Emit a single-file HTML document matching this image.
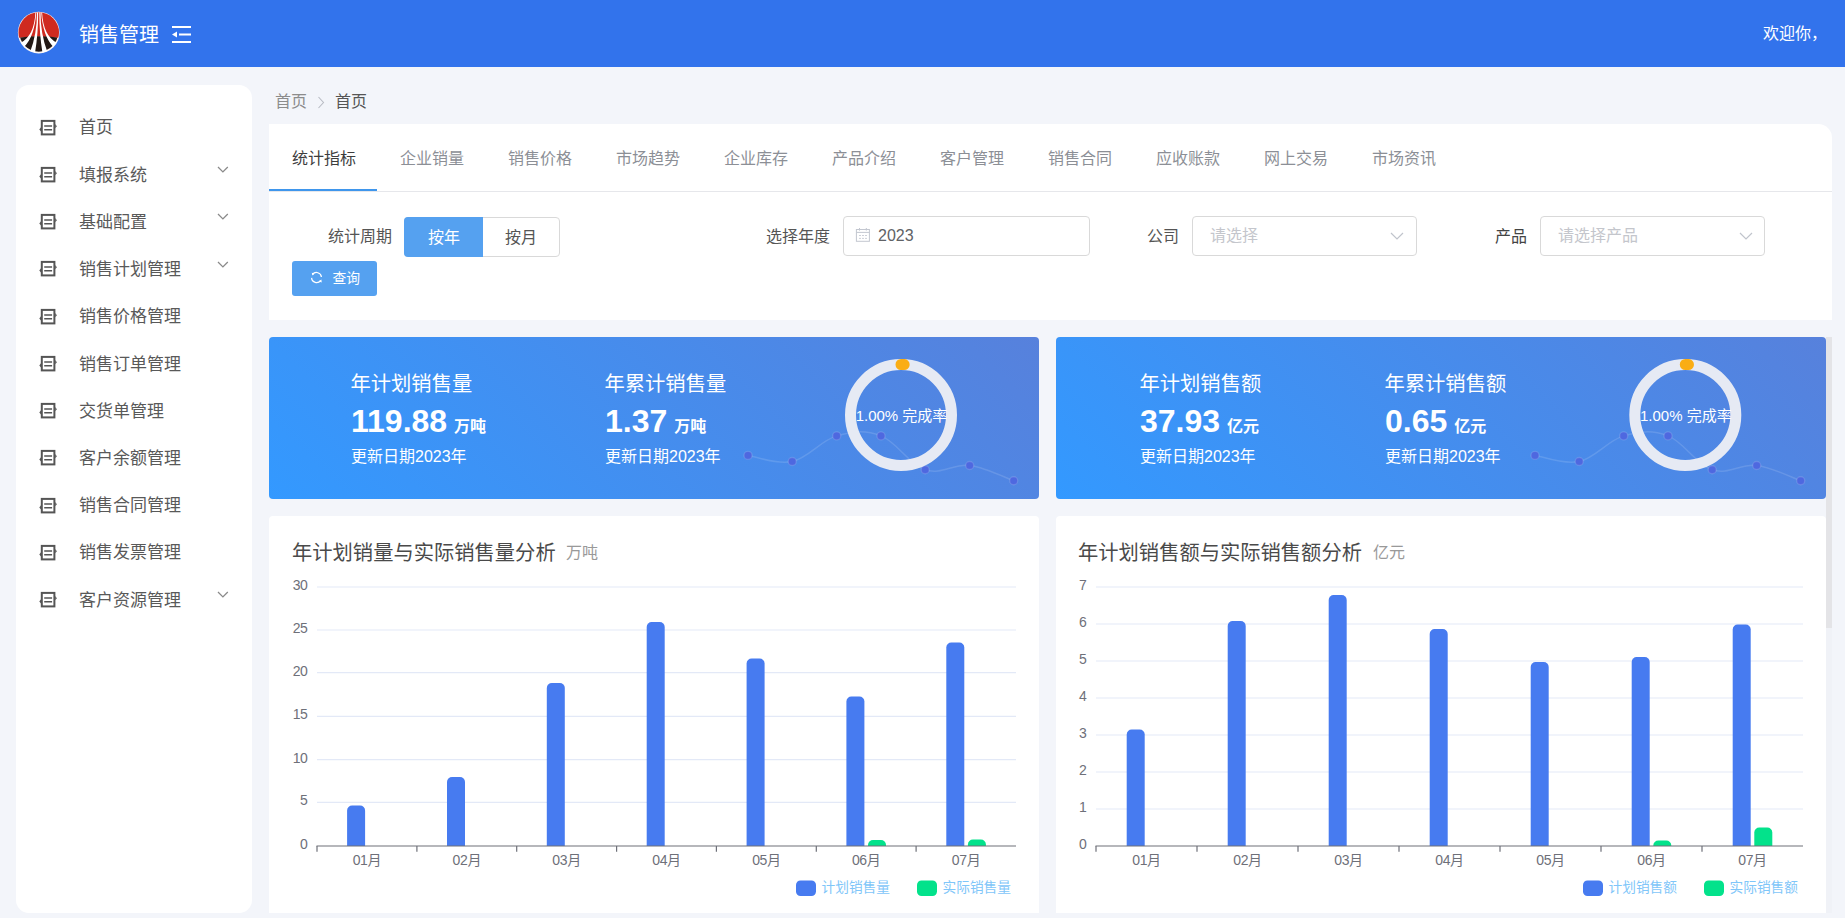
<!DOCTYPE html><html lang="zh-CN"><head><meta charset="utf-8"><title>销售管理</title><style>
*{box-sizing:border-box;margin:0;padding:0}
html,body{width:1845px;height:918px;overflow:hidden}
body{background:#f3f5fa;font-family:"Liberation Sans","Noto Sans CJK SC",sans-serif;position:relative;color:#4d4d4d}
.abs{position:absolute}
.t{position:absolute;white-space:nowrap;line-height:1}
#hdr{left:0;top:0;width:1845px;height:67px;background:#3273ec}
#side{left:16px;top:85px;width:236px;height:828px;background:#fff;border-radius:13px}
.mi{font-size:17px;color:#595959;left:79px}
.tab{font-size:16px;color:#8c8f96}
.lbl{font-size:16px;color:#555}
.inp{border:1px solid #d9d9d9;border-radius:4px;background:#fff;height:40px;top:216px}
.ph{font-size:16px;color:#c4c6cc}
.card{background:#fff;border-radius:4px 4px 0 0}
.stat{border-radius:4px;background:linear-gradient(45deg,#3399ff 0%,#5781dc 100%);overflow:hidden}
.st1{font-size:20.3px;color:#fff;font-weight:400;margin-left:-.5px}
.st2{font-size:32px;color:#fff;font-weight:700}
.st2 small{font-size:16px;font-weight:700;margin-left:7px}
.st3{font-size:16px;color:#fff}
svg{position:absolute;overflow:visible}
svg text{font-family:"Liberation Sans","Noto Sans CJK SC",sans-serif}
</style></head><body>
<div id="hdr" class="abs"></div>
<svg style="left:12px;top:6px" width="54" height="54" viewBox="0 0 54 54">
<defs><clipPath id="lc"><circle cx="26.75" cy="26.6" r="20.3"/></clipPath><clipPath id="lc2"><circle cx="26.75" cy="26.3" r="19.4"/></clipPath></defs>
<circle cx="26.75" cy="26.6" r="20.85" fill="#fdf6f4"/>
<g clip-path="url(#lc)"><path d="M0 0 H54 V33.2 Q26.75 27.6 0 33.2 Z" fill="#cf2a20"/></g>
<g clip-path="url(#lc2)"><path d="M0 33 Q26.75 27.6 54 33 V54 H0 Z" fill="#231815"/></g>
<g fill="#fff" clip-path="url(#lc)">
<path d="M23.5 5 Q22.6 30 8.3 37 L12.1 40.9 Q22.9 30 24.4 5 Z"/>
<path d="M25.0 5 Q25.2 28 17.6 47.5 L22.9 47.5 Q26.3 28 26.2 5 Z"/>
<path d="M30.0 5 Q30.9 30 45.2 37 L41.4 40.9 Q30.6 30 29.1 5 Z"/>
<path d="M28.5 5 Q28.3 28 35.9 47.5 L30.6 47.5 Q27.2 28 27.3 5 Z"/>
</g></svg>
<div class="t" style="left:79px;top:25px;font-size:20px;color:#fff">销售管理</div>
<svg style="left:172px;top:26px" width="19" height="17" viewBox="0 0 19 17"><g fill="#fff"><rect x="0" y="0" width="19" height="2"/><rect x="7" y="7.5" width="12" height="2"/><rect x="0" y="15" width="19" height="2"/><path d="M0 8.5 L5 5.5 V11.5 Z"/></g></svg>
<div class="t" style="left:1763px;top:26px;font-size:16px;color:#fff">欢迎你，</div>
<div id="side" class="abs"></div>
<svg style="left:39px;top:118.5px" width="18" height="17" viewBox="0 0 18 17"><rect x="2.8" y="1.9" width="12.6" height="13.5" fill="none" stroke="#555" stroke-width="2"/><path d="M5.2 7 H13.1 M5.2 10.7 H13.1" stroke="#555" stroke-width="1.5" fill="none"/><path d="M16.2 5.1 L17.9 7.2 L16.2 9.3 Z M2 8.3 L0.3 10.4 L2 12.5 Z" fill="#555"/></svg>
<div class="t mi" style="top:119px">首页</div>
<svg style="left:39px;top:165.8px" width="18" height="17" viewBox="0 0 18 17"><rect x="2.8" y="1.9" width="12.6" height="13.5" fill="none" stroke="#555" stroke-width="2"/><path d="M5.2 7 H13.1 M5.2 10.7 H13.1" stroke="#555" stroke-width="1.5" fill="none"/><path d="M16.2 5.1 L17.9 7.2 L16.2 9.3 Z M2 8.3 L0.3 10.4 L2 12.5 Z" fill="#555"/></svg>
<div class="t mi" style="top:167px">填报系统</div>
<svg style="left:217px;top:166.2px" width="12" height="8" viewBox="0 0 12 8"><path d="M1 1 L5.9 5.9 L10.8 1" fill="none" stroke="#8a8a8a" stroke-width="1.3"/></svg>
<svg style="left:39px;top:213.0px" width="18" height="17" viewBox="0 0 18 17"><rect x="2.8" y="1.9" width="12.6" height="13.5" fill="none" stroke="#555" stroke-width="2"/><path d="M5.2 7 H13.1 M5.2 10.7 H13.1" stroke="#555" stroke-width="1.5" fill="none"/><path d="M16.2 5.1 L17.9 7.2 L16.2 9.3 Z M2 8.3 L0.3 10.4 L2 12.5 Z" fill="#555"/></svg>
<div class="t mi" style="top:214px">基础配置</div>
<svg style="left:217px;top:213.4px" width="12" height="8" viewBox="0 0 12 8"><path d="M1 1 L5.9 5.9 L10.8 1" fill="none" stroke="#8a8a8a" stroke-width="1.3"/></svg>
<svg style="left:39px;top:260.2px" width="18" height="17" viewBox="0 0 18 17"><rect x="2.8" y="1.9" width="12.6" height="13.5" fill="none" stroke="#555" stroke-width="2"/><path d="M5.2 7 H13.1 M5.2 10.7 H13.1" stroke="#555" stroke-width="1.5" fill="none"/><path d="M16.2 5.1 L17.9 7.2 L16.2 9.3 Z M2 8.3 L0.3 10.4 L2 12.5 Z" fill="#555"/></svg>
<div class="t mi" style="top:261px">销售计划管理</div>
<svg style="left:217px;top:260.6px" width="12" height="8" viewBox="0 0 12 8"><path d="M1 1 L5.9 5.9 L10.8 1" fill="none" stroke="#8a8a8a" stroke-width="1.3"/></svg>
<svg style="left:39px;top:307.5px" width="18" height="17" viewBox="0 0 18 17"><rect x="2.8" y="1.9" width="12.6" height="13.5" fill="none" stroke="#555" stroke-width="2"/><path d="M5.2 7 H13.1 M5.2 10.7 H13.1" stroke="#555" stroke-width="1.5" fill="none"/><path d="M16.2 5.1 L17.9 7.2 L16.2 9.3 Z M2 8.3 L0.3 10.4 L2 12.5 Z" fill="#555"/></svg>
<div class="t mi" style="top:308px">销售价格管理</div>
<svg style="left:39px;top:354.8px" width="18" height="17" viewBox="0 0 18 17"><rect x="2.8" y="1.9" width="12.6" height="13.5" fill="none" stroke="#555" stroke-width="2"/><path d="M5.2 7 H13.1 M5.2 10.7 H13.1" stroke="#555" stroke-width="1.5" fill="none"/><path d="M16.2 5.1 L17.9 7.2 L16.2 9.3 Z M2 8.3 L0.3 10.4 L2 12.5 Z" fill="#555"/></svg>
<div class="t mi" style="top:356px">销售订单管理</div>
<svg style="left:39px;top:402.0px" width="18" height="17" viewBox="0 0 18 17"><rect x="2.8" y="1.9" width="12.6" height="13.5" fill="none" stroke="#555" stroke-width="2"/><path d="M5.2 7 H13.1 M5.2 10.7 H13.1" stroke="#555" stroke-width="1.5" fill="none"/><path d="M16.2 5.1 L17.9 7.2 L16.2 9.3 Z M2 8.3 L0.3 10.4 L2 12.5 Z" fill="#555"/></svg>
<div class="t mi" style="top:403px">交货单管理</div>
<svg style="left:39px;top:449.2px" width="18" height="17" viewBox="0 0 18 17"><rect x="2.8" y="1.9" width="12.6" height="13.5" fill="none" stroke="#555" stroke-width="2"/><path d="M5.2 7 H13.1 M5.2 10.7 H13.1" stroke="#555" stroke-width="1.5" fill="none"/><path d="M16.2 5.1 L17.9 7.2 L16.2 9.3 Z M2 8.3 L0.3 10.4 L2 12.5 Z" fill="#555"/></svg>
<div class="t mi" style="top:450px">客户余额管理</div>
<svg style="left:39px;top:496.5px" width="18" height="17" viewBox="0 0 18 17"><rect x="2.8" y="1.9" width="12.6" height="13.5" fill="none" stroke="#555" stroke-width="2"/><path d="M5.2 7 H13.1 M5.2 10.7 H13.1" stroke="#555" stroke-width="1.5" fill="none"/><path d="M16.2 5.1 L17.9 7.2 L16.2 9.3 Z M2 8.3 L0.3 10.4 L2 12.5 Z" fill="#555"/></svg>
<div class="t mi" style="top:497px">销售合同管理</div>
<svg style="left:39px;top:543.8px" width="18" height="17" viewBox="0 0 18 17"><rect x="2.8" y="1.9" width="12.6" height="13.5" fill="none" stroke="#555" stroke-width="2"/><path d="M5.2 7 H13.1 M5.2 10.7 H13.1" stroke="#555" stroke-width="1.5" fill="none"/><path d="M16.2 5.1 L17.9 7.2 L16.2 9.3 Z M2 8.3 L0.3 10.4 L2 12.5 Z" fill="#555"/></svg>
<div class="t mi" style="top:544px">销售发票管理</div>
<svg style="left:39px;top:591.0px" width="18" height="17" viewBox="0 0 18 17"><rect x="2.8" y="1.9" width="12.6" height="13.5" fill="none" stroke="#555" stroke-width="2"/><path d="M5.2 7 H13.1 M5.2 10.7 H13.1" stroke="#555" stroke-width="1.5" fill="none"/><path d="M16.2 5.1 L17.9 7.2 L16.2 9.3 Z M2 8.3 L0.3 10.4 L2 12.5 Z" fill="#555"/></svg>
<div class="t mi" style="top:592px">客户资源管理</div>
<svg style="left:217px;top:591.4px" width="12" height="8" viewBox="0 0 12 8"><path d="M1 1 L5.9 5.9 L10.8 1" fill="none" stroke="#8a8a8a" stroke-width="1.3"/></svg>
<div class="t" style="left:275px;top:94px;font-size:16px;color:#8c8c8c">首页</div>
<svg style="left:317px;top:95.5px" width="8" height="13" viewBox="0 0 8 13"><path d="M1.5 1 L6.5 6.5 L1.5 12" fill="none" stroke="#b9bcc4" stroke-width="1.1"/></svg>
<div class="t" style="left:335px;top:94px;font-size:16px;color:#555">首页</div>
<div class="abs" style="left:269px;top:124px;width:1563px;height:196px;background:#fff;border-radius:0 14px 0 0"></div>
<div class="abs" style="left:269px;top:191px;width:1563px;height:1px;background:#e6e7eb"></div>
<div class="abs" style="left:269px;top:189px;width:108px;height:2px;background:#3f96ec"></div>
<div class="t tab" style="left:292px;top:151px;color:#3d3d3d">统计指标</div>
<div class="t tab" style="left:400px;top:151px">企业销量</div>
<div class="t tab" style="left:508px;top:151px">销售价格</div>
<div class="t tab" style="left:616px;top:151px">市场趋势</div>
<div class="t tab" style="left:724px;top:151px">企业库存</div>
<div class="t tab" style="left:832px;top:151px">产品介绍</div>
<div class="t tab" style="left:940px;top:151px">客户管理</div>
<div class="t tab" style="left:1048px;top:151px">销售合同</div>
<div class="t tab" style="left:1156px;top:151px">应收账款</div>
<div class="t tab" style="left:1264px;top:151px">网上交易</div>
<div class="t tab" style="left:1372px;top:151px">市场资讯</div>
<div class="t lbl" style="left:328px;top:228.6px">统计周期</div>
<div class="abs" style="left:404px;top:217px;width:156px;height:40px;border:1px solid #d9d9d9;border-radius:4px;background:#fff"></div>
<div class="abs" style="left:404px;top:217px;width:79px;height:40px;background:#55a1f0;border-radius:4px 0 0 4px"></div>
<div class="t" style="left:428px;top:230.2px;font-size:16px;color:#fff">按年</div>
<div class="t" style="left:505px;top:230.2px;font-size:16px;color:#555">按月</div>
<div class="t lbl" style="left:766px;top:228.6px">选择年度</div>
<div class="abs inp" style="left:843px;width:247px"></div>
<svg style="left:855px;top:227px" width="16" height="16" viewBox="0 0 16 16"><g fill="none" stroke="#c3c7d0" stroke-width="1"><rect x="1.4" y="2.5" width="13" height="11.8"/><path d="M1.4 5.4 H14.4 M4.5 1 V3.6 M11.3 1 V3.6"/><path d="M4 8.5 H12 M4 11.4 H12" stroke-dasharray="2 1" stroke="#cdd0d8"/></g></svg>
<div class="t" style="left:878px;top:228px;font-size:16px;color:#606266">2023</div>
<div class="t lbl" style="left:1147px;top:228.6px">公司</div>
<div class="abs inp" style="left:1192px;width:225px"></div>
<div class="t ph" style="left:1210px;top:228px">请选择</div>
<svg style="left:1390px;top:232px" width="14" height="8" viewBox="0 0 14 8"><path d="M1 1 L7 7 L13 1" fill="none" stroke="#c0c4cc" stroke-width="1.2"/></svg>
<div class="t lbl" style="left:1495px;top:228.6px;color:#444">产品</div>
<div class="abs inp" style="left:1540px;width:225px"></div>
<div class="t ph" style="left:1558px;top:228px">请选择产品</div>
<svg style="left:1739px;top:232px" width="14" height="8" viewBox="0 0 14 8"><path d="M1 1 L7 7 L13 1" fill="none" stroke="#c0c4cc" stroke-width="1.2"/></svg>
<div class="abs" style="left:292px;top:261px;width:85px;height:35px;background:#55a1f0;border-radius:3px"></div>
<svg style="left:310px;top:271px" width="14" height="14" viewBox="0 0 14 14"><g fill="none" stroke="#fff" stroke-width="1.25"><path d="M2.6 3.5 A4.9 4.9 0 0 1 11.4 6"/><path d="M1.6 6.9 A4.9 4.9 0 0 0 10.6 9.3"/></g><path d="M1.8 1.8 L4.4 2.6 L2.3 4.6 Z M11.7 11.5 L9 10.6 L11.4 8.6 Z" fill="#fff"/></svg>
<div class="t" style="left:332.5px;top:271.6px;font-size:13.8px;color:#fff">查询</div>
<div class="abs" style="left:1826px;top:337px;width:6px;height:576px;background:#f0f2f7"></div>
<div class="abs" style="left:1826px;top:337px;width:6px;height:291px;background:#e4e4e7"></div>
<div class="abs stat" style="left:269px;top:337px;width:770px;height:162px"></div>
<div class="t st1" style="left:351px;top:374px">年计划销售量</div>
<div class="t st2" style="left:351px;top:405px">119.88<small>万吨</small></div>
<div class="t st3" style="left:351px;top:449px">更新日期2023年</div>
<div class="t st1" style="left:605px;top:374px">年累计销售量</div>
<div class="t st2" style="left:605px;top:405px">1.37<small>万吨</small></div>
<div class="t st3" style="left:605px;top:449px">更新日期2023年</div>
<svg style="left:0;top:0" width="1845" height="918" viewBox="0 0 1845 918"><path d="M748.0 455.4 C756.0 456.5 776.2 465.0 792.2 461.5 C808.2 458.0 820.7 440.5 836.7 435.9 C852.7 431.3 865.1 429.8 881.0 435.9 C896.9 442.0 909.2 464.5 925.2 469.8 C941.2 475.1 953.8 463.5 969.7 465.5 C985.6 467.5 1005.8 478.0 1013.7 480.8" fill="none" stroke="#fff" stroke-opacity=".13" stroke-width="1.5"/><circle cx="748.0" cy="455.4" r="4" fill="#4e68e0" stroke="#fff" stroke-opacity=".14" stroke-width="1.4"/><circle cx="792.2" cy="461.5" r="4" fill="#4e68e0" stroke="#fff" stroke-opacity=".14" stroke-width="1.4"/><circle cx="836.7" cy="435.9" r="4" fill="#4e68e0" stroke="#fff" stroke-opacity=".14" stroke-width="1.4"/><circle cx="881.0" cy="435.9" r="4" fill="#4e68e0" stroke="#fff" stroke-opacity=".14" stroke-width="1.4"/><circle cx="925.2" cy="469.8" r="4" fill="#4e68e0" stroke="#fff" stroke-opacity=".14" stroke-width="1.4"/><circle cx="969.7" cy="465.5" r="4" fill="#4e68e0" stroke="#fff" stroke-opacity=".14" stroke-width="1.4"/><circle cx="1013.7" cy="480.8" r="4" fill="#4e68e0" stroke="#fff" stroke-opacity=".14" stroke-width="1.4"/><circle cx="901.0" cy="415" r="50.5" fill="none" stroke="#e6eaf4" stroke-width="11"/><path d="M901.00 364.50 A50.5 50.5 0 0 1 904.17 364.60" fill="none" stroke="#faad14" stroke-width="11" stroke-linecap="round"/><text x="901.5" y="420.5" font-size="15" fill="#fff" text-anchor="middle">1.00% 完成率</text></svg>
<div class="abs stat" style="left:1056px;top:337px;width:770px;height:162px"></div>
<div class="t st1" style="left:1140px;top:374px">年计划销售额</div>
<div class="t st2" style="left:1140px;top:405px">37.93<small>亿元</small></div>
<div class="t st3" style="left:1140px;top:449px">更新日期2023年</div>
<div class="t st1" style="left:1385px;top:374px">年累计销售额</div>
<div class="t st2" style="left:1385px;top:405px">0.65<small>亿元</small></div>
<div class="t st3" style="left:1385px;top:449px">更新日期2023年</div>
<svg style="left:0;top:0" width="1845" height="918" viewBox="0 0 1845 918"><path d="M1535.0 455.4 C1543.0 456.5 1563.2 465.0 1579.2 461.5 C1595.2 458.0 1607.7 440.5 1623.7 435.9 C1639.7 431.3 1652.1 429.8 1668.0 435.9 C1683.9 442.0 1696.2 464.5 1712.2 469.8 C1728.2 475.1 1740.8 463.5 1756.7 465.5 C1772.6 467.5 1792.8 478.0 1800.7 480.8" fill="none" stroke="#fff" stroke-opacity=".13" stroke-width="1.5"/><circle cx="1535.0" cy="455.4" r="4" fill="#4e68e0" stroke="#fff" stroke-opacity=".14" stroke-width="1.4"/><circle cx="1579.2" cy="461.5" r="4" fill="#4e68e0" stroke="#fff" stroke-opacity=".14" stroke-width="1.4"/><circle cx="1623.7" cy="435.9" r="4" fill="#4e68e0" stroke="#fff" stroke-opacity=".14" stroke-width="1.4"/><circle cx="1668.0" cy="435.9" r="4" fill="#4e68e0" stroke="#fff" stroke-opacity=".14" stroke-width="1.4"/><circle cx="1712.2" cy="469.8" r="4" fill="#4e68e0" stroke="#fff" stroke-opacity=".14" stroke-width="1.4"/><circle cx="1756.7" cy="465.5" r="4" fill="#4e68e0" stroke="#fff" stroke-opacity=".14" stroke-width="1.4"/><circle cx="1800.7" cy="480.8" r="4" fill="#4e68e0" stroke="#fff" stroke-opacity=".14" stroke-width="1.4"/><circle cx="1685.3" cy="415" r="50.5" fill="none" stroke="#e6eaf4" stroke-width="11"/><path d="M1685.30 364.50 A50.5 50.5 0 0 1 1688.47 364.60" fill="none" stroke="#faad14" stroke-width="11" stroke-linecap="round"/><text x="1685.8" y="420.5" font-size="15" fill="#fff" text-anchor="middle">1.00% 完成率</text></svg>
<div class="abs card" style="left:269px;top:516px;width:770px;height:397px"></div>
<div class="t" style="left:292.0px;top:543px;font-size:20.3px;color:#4a4a4a">年计划销量与实际销售量分析</div>
<div class="t" style="left:566px;top:545px;font-size:16px;color:#999">万吨</div>
<svg style="left:0;top:0" width="1845" height="918" viewBox="0 0 1845 918"><text x="307.1" y="849.0" font-size="14" letter-spacing="-.6" fill="#6e7079" text-anchor="end">0</text><line x1="317.0" x2="1016.0" y1="802.40" y2="802.40" stroke="#e3e9f7" stroke-width="1.1"/><text x="307.1" y="805.0" font-size="14" letter-spacing="-.6" fill="#6e7079" text-anchor="end">5</text><line x1="317.0" x2="1016.0" y1="759.60" y2="759.60" stroke="#e3e9f7" stroke-width="1.1"/><text x="307.1" y="763.0" font-size="14" letter-spacing="-.6" fill="#6e7079" text-anchor="end">10</text><line x1="317.0" x2="1016.0" y1="716.40" y2="716.40" stroke="#e3e9f7" stroke-width="1.1"/><text x="307.1" y="719.0" font-size="14" letter-spacing="-.6" fill="#6e7079" text-anchor="end">15</text><line x1="317.0" x2="1016.0" y1="672.60" y2="672.60" stroke="#e3e9f7" stroke-width="1.1"/><text x="307.1" y="676.0" font-size="14" letter-spacing="-.6" fill="#6e7079" text-anchor="end">20</text><line x1="317.0" x2="1016.0" y1="630.00" y2="630.00" stroke="#e3e9f7" stroke-width="1.1"/><text x="307.1" y="633.0" font-size="14" letter-spacing="-.6" fill="#6e7079" text-anchor="end">25</text><line x1="317.0" x2="1016.0" y1="587.00" y2="587.00" stroke="#e3e9f7" stroke-width="1.1"/><text x="307.1" y="590.0" font-size="14" letter-spacing="-.6" fill="#6e7079" text-anchor="end">30</text><path d="M347.1 846.0 V810.6 A5.0 5.0 0 0 1 352.1 805.6 H360.1 A5.0 5.0 0 0 1 365.1 810.6 V846.0 Z" fill="#477bf0"/><text x="366.9" y="865" font-size="14" letter-spacing="-.35" fill="#6e7079" text-anchor="middle">01月</text><path d="M447.0 846.0 V782.0 A5.0 5.0 0 0 1 452.0 777.0 H460.0 A5.0 5.0 0 0 1 465.0 782.0 V846.0 Z" fill="#477bf0"/><text x="466.8" y="865" font-size="14" letter-spacing="-.35" fill="#6e7079" text-anchor="middle">02月</text><path d="M546.8 846.0 V688.0 A5.0 5.0 0 0 1 551.8 683.0 H559.8 A5.0 5.0 0 0 1 564.8 688.0 V846.0 Z" fill="#477bf0"/><text x="566.6" y="865" font-size="14" letter-spacing="-.35" fill="#6e7079" text-anchor="middle">03月</text><path d="M646.7 846.0 V627.0 A5.0 5.0 0 0 1 651.7 622.0 H659.7 A5.0 5.0 0 0 1 664.7 627.0 V846.0 Z" fill="#477bf0"/><text x="666.5" y="865" font-size="14" letter-spacing="-.35" fill="#6e7079" text-anchor="middle">04月</text><path d="M746.6 846.0 V663.5 A5.0 5.0 0 0 1 751.6 658.5 H759.6 A5.0 5.0 0 0 1 764.6 663.5 V846.0 Z" fill="#477bf0"/><text x="766.4" y="865" font-size="14" letter-spacing="-.35" fill="#6e7079" text-anchor="middle">05月</text><path d="M846.4 846.0 V701.5 A5.0 5.0 0 0 1 851.4 696.5 H859.4 A5.0 5.0 0 0 1 864.4 701.5 V846.0 Z" fill="#477bf0"/><path d="M868.0 846.0 V845.0 A5.0 5.0 0 0 1 873.0 840.0 H881.0 A5.0 5.0 0 0 1 886.0 845.0 V846.0 Z" fill="#03e28b"/><text x="866.2" y="865" font-size="14" letter-spacing="-.35" fill="#6e7079" text-anchor="middle">06月</text><path d="M946.3 846.0 V647.5 A5.0 5.0 0 0 1 951.3 642.5 H959.3 A5.0 5.0 0 0 1 964.3 647.5 V846.0 Z" fill="#477bf0"/><path d="M967.9 846.0 V844.5 A5.0 5.0 0 0 1 972.9 839.5 H980.9 A5.0 5.0 0 0 1 985.9 844.5 V846.0 Z" fill="#03e28b"/><text x="966.1" y="865" font-size="14" letter-spacing="-.35" fill="#6e7079" text-anchor="middle">07月</text><line x1="316.5" x2="1016.0" y1="846.0" y2="846.0" stroke="#6e7079" stroke-width="1.15"/><line x1="317.0" x2="317.0" y1="846.0" y2="851.8" stroke="#6e7079" stroke-width="1.2"/><line x1="416.9" x2="416.9" y1="846.0" y2="851.8" stroke="#6e7079" stroke-width="1.2"/><line x1="516.7" x2="516.7" y1="846.0" y2="851.8" stroke="#6e7079" stroke-width="1.2"/><line x1="616.6" x2="616.6" y1="846.0" y2="851.8" stroke="#6e7079" stroke-width="1.2"/><line x1="716.4" x2="716.4" y1="846.0" y2="851.8" stroke="#6e7079" stroke-width="1.2"/><line x1="816.3" x2="816.3" y1="846.0" y2="851.8" stroke="#6e7079" stroke-width="1.2"/><line x1="916.1" x2="916.1" y1="846.0" y2="851.8" stroke="#6e7079" stroke-width="1.2"/><rect x="796.0" y="880.5" width="20" height="15.5" rx="4.5" fill="#477bf0"/><text x="821.5" y="891.6" font-size="13.7" fill="#7fc6f9">计划销售量</text><rect x="917.0" y="880.5" width="20" height="15.5" rx="4.5" fill="#03e28b"/><text x="942.5" y="891.6" font-size="13.7" fill="#7fc6f9">实际销售量</text></svg>
<div class="abs card" style="left:1056px;top:516px;width:770px;height:397px"></div>
<div class="t" style="left:1078.0px;top:543px;font-size:20.3px;color:#4a4a4a">年计划销售额与实际销售额分析</div>
<div class="t" style="left:1373px;top:545px;font-size:16px;color:#999">亿元</div>
<svg style="left:0;top:0" width="1845" height="918" viewBox="0 0 1845 918"><text x="1086.1" y="849.0" font-size="14" letter-spacing="-.6" fill="#6e7079" text-anchor="end">0</text><line x1="1096.0" x2="1803.0" y1="809.00" y2="809.00" stroke="#e3e9f7" stroke-width="1.1"/><text x="1086.1" y="812.0" font-size="14" letter-spacing="-.6" fill="#6e7079" text-anchor="end">1</text><line x1="1096.0" x2="1803.0" y1="772.00" y2="772.00" stroke="#e3e9f7" stroke-width="1.1"/><text x="1086.1" y="775.0" font-size="14" letter-spacing="-.6" fill="#6e7079" text-anchor="end">2</text><line x1="1096.0" x2="1803.0" y1="735.00" y2="735.00" stroke="#e3e9f7" stroke-width="1.1"/><text x="1086.1" y="738.0" font-size="14" letter-spacing="-.6" fill="#6e7079" text-anchor="end">3</text><line x1="1096.0" x2="1803.0" y1="698.00" y2="698.00" stroke="#e3e9f7" stroke-width="1.1"/><text x="1086.1" y="701.0" font-size="14" letter-spacing="-.6" fill="#6e7079" text-anchor="end">4</text><line x1="1096.0" x2="1803.0" y1="661.00" y2="661.00" stroke="#e3e9f7" stroke-width="1.1"/><text x="1086.1" y="664.0" font-size="14" letter-spacing="-.6" fill="#6e7079" text-anchor="end">5</text><line x1="1096.0" x2="1803.0" y1="624.00" y2="624.00" stroke="#e3e9f7" stroke-width="1.1"/><text x="1086.1" y="627.0" font-size="14" letter-spacing="-.6" fill="#6e7079" text-anchor="end">6</text><line x1="1096.0" x2="1803.0" y1="587.00" y2="587.00" stroke="#e3e9f7" stroke-width="1.1"/><text x="1086.1" y="590.0" font-size="14" letter-spacing="-.6" fill="#6e7079" text-anchor="end">7</text><path d="M1126.7 846.0 V734.5 A5.0 5.0 0 0 1 1131.7 729.5 H1139.7 A5.0 5.0 0 0 1 1144.7 734.5 V846.0 Z" fill="#477bf0"/><text x="1146.5" y="865" font-size="14" letter-spacing="-.35" fill="#6e7079" text-anchor="middle">01月</text><path d="M1227.7 846.0 V626.0 A5.0 5.0 0 0 1 1232.7 621.0 H1240.7 A5.0 5.0 0 0 1 1245.7 626.0 V846.0 Z" fill="#477bf0"/><text x="1247.5" y="865" font-size="14" letter-spacing="-.35" fill="#6e7079" text-anchor="middle">02月</text><path d="M1328.7 846.0 V600.0 A5.0 5.0 0 0 1 1333.7 595.0 H1341.7 A5.0 5.0 0 0 1 1346.7 600.0 V846.0 Z" fill="#477bf0"/><text x="1348.5" y="865" font-size="14" letter-spacing="-.35" fill="#6e7079" text-anchor="middle">03月</text><path d="M1429.7 846.0 V634.0 A5.0 5.0 0 0 1 1434.7 629.0 H1442.7 A5.0 5.0 0 0 1 1447.7 634.0 V846.0 Z" fill="#477bf0"/><text x="1449.5" y="865" font-size="14" letter-spacing="-.35" fill="#6e7079" text-anchor="middle">04月</text><path d="M1530.7 846.0 V667.0 A5.0 5.0 0 0 1 1535.7 662.0 H1543.7 A5.0 5.0 0 0 1 1548.7 667.0 V846.0 Z" fill="#477bf0"/><text x="1550.5" y="865" font-size="14" letter-spacing="-.35" fill="#6e7079" text-anchor="middle">05月</text><path d="M1631.7 846.0 V662.0 A5.0 5.0 0 0 1 1636.7 657.0 H1644.7 A5.0 5.0 0 0 1 1649.7 662.0 V846.0 Z" fill="#477bf0"/><path d="M1653.3 846.0 V845.5 A5.0 5.0 0 0 1 1658.3 840.5 H1666.3 A5.0 5.0 0 0 1 1671.3 845.5 V846.0 Z" fill="#03e28b"/><text x="1651.5" y="865" font-size="14" letter-spacing="-.35" fill="#6e7079" text-anchor="middle">06月</text><path d="M1732.7 846.0 V629.5 A5.0 5.0 0 0 1 1737.7 624.5 H1745.7 A5.0 5.0 0 0 1 1750.7 629.5 V846.0 Z" fill="#477bf0"/><path d="M1754.3 846.0 V832.5 A5.0 5.0 0 0 1 1759.3 827.5 H1767.3 A5.0 5.0 0 0 1 1772.3 832.5 V846.0 Z" fill="#03e28b"/><text x="1752.5" y="865" font-size="14" letter-spacing="-.35" fill="#6e7079" text-anchor="middle">07月</text><line x1="1095.5" x2="1803.0" y1="846.0" y2="846.0" stroke="#6e7079" stroke-width="1.15"/><line x1="1096.0" x2="1096.0" y1="846.0" y2="851.8" stroke="#6e7079" stroke-width="1.2"/><line x1="1197.0" x2="1197.0" y1="846.0" y2="851.8" stroke="#6e7079" stroke-width="1.2"/><line x1="1298.0" x2="1298.0" y1="846.0" y2="851.8" stroke="#6e7079" stroke-width="1.2"/><line x1="1399.0" x2="1399.0" y1="846.0" y2="851.8" stroke="#6e7079" stroke-width="1.2"/><line x1="1500.0" x2="1500.0" y1="846.0" y2="851.8" stroke="#6e7079" stroke-width="1.2"/><line x1="1601.0" x2="1601.0" y1="846.0" y2="851.8" stroke="#6e7079" stroke-width="1.2"/><line x1="1702.0" x2="1702.0" y1="846.0" y2="851.8" stroke="#6e7079" stroke-width="1.2"/><rect x="1583.0" y="880.5" width="20" height="15.5" rx="4.5" fill="#477bf0"/><text x="1608.5" y="891.6" font-size="13.7" fill="#7fc6f9">计划销售额</text><rect x="1704.0" y="880.5" width="20" height="15.5" rx="4.5" fill="#03e28b"/><text x="1729.5" y="891.6" font-size="13.7" fill="#7fc6f9">实际销售额</text></svg>
</body></html>
